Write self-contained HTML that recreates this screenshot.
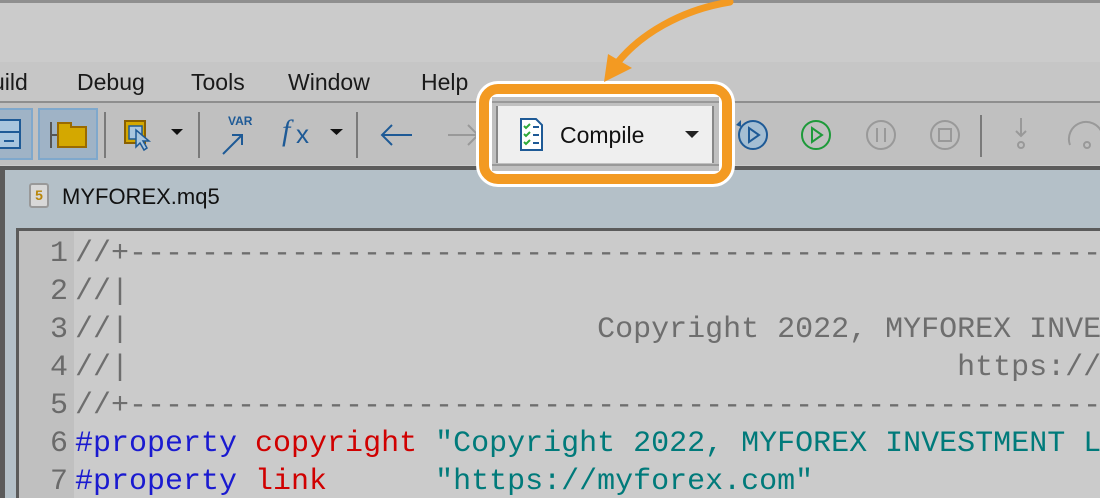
<!DOCTYPE html>
<html><head><meta charset="utf-8"><style>
*{margin:0;padding:0;box-sizing:border-box}
html,body{width:1100px;height:498px;overflow:hidden}
body{background:#cbcbcb;position:relative;font-family:"Liberation Sans",sans-serif}
.abs{position:absolute}
.menu{font-size:23px;color:#1a1a1a;top:69px}
.code{position:absolute;left:56px;top:4px;font-family:"Liberation Mono",monospace;font-size:30px;line-height:38px;white-space:pre;color:#6e6e6e}
.num{position:absolute;left:-1px;top:4px;width:50px;text-align:right;font-family:"Liberation Mono",monospace;font-size:30px;line-height:38px;color:#6a6a6a}
.sep{position:absolute;top:112px;width:2px;height:46px;background:#7a7a7a}
</style></head><body>
<div class="abs" style="left:0;top:0;width:1100px;height:3px;background:#8f8f8f"></div>
<div class="abs" style="left:0;top:62px;width:1100px;height:40px;background:#c6c6c6"></div>
<div class="abs menu" style="left:-8px">uild</div>
<div class="abs menu" style="left:77px">Debug</div>
<div class="abs menu" style="left:191px">Tools</div>
<div class="abs menu" style="left:288px">Window</div>
<div class="abs menu" style="left:421px">Help</div>
<div class="abs" style="left:0;top:101px;width:1100px;height:2px;background:#8e8e8e"></div>
<div class="abs" style="left:0;top:103px;width:1100px;height:62px;background:#c0c0c0"></div>
<div class="abs" style="left:0;top:108px;width:33px;height:52px;background:#9fb3c6;border:2px solid #7fa8cc;border-left:none"></div>
<svg class="abs" style="left:0;top:118px" width="24" height="34"><rect x="-6" y="2" width="26" height="28" fill="#a9c6de" stroke="#1e5a96" stroke-width="2"/><line x1="0" y1="14" x2="20" y2="14" stroke="#1e5a96" stroke-width="2"/><line x1="4" y1="23" x2="14" y2="23" stroke="#1e5a96" stroke-width="2"/></svg>
<div class="abs" style="left:38px;top:108px;width:60px;height:52px;background:#9fb3c6;border:2px solid #7fa8cc"></div>
<svg class="abs" style="left:48px;top:120px" width="45" height="30"><line x1="3" y1="2" x2="3" y2="28" stroke="#555" stroke-width="2"/><line x1="3" y1="15" x2="10" y2="15" stroke="#555" stroke-width="2"/><path d="M10 3h13v4h15v20H10z" fill="#d4a800" stroke="#9a6a00" stroke-width="2"/></svg>
<div class="sep" style="left:104px"></div>
<svg class="abs" style="left:122px;top:116px" width="70" height="42"><rect x="3" y="5" width="20" height="22" fill="#d4a800" stroke="#8a6000" stroke-width="2"/><rect x="7" y="10" width="13" height="13" fill="#a9c6de" stroke="#1e5a96" stroke-width="1.5"/><path d="M14 14 l0 17 4-4 4 7 3-2 -4-7 6 0z" fill="#a9c6de" stroke="#1e5a96" stroke-width="1.5"/><path d="M49 13h12l-6 6z" fill="#111"/></svg>
<div class="sep" style="left:198px"></div>
<div class="abs" style="left:228px;top:114px;font:bold 12px 'Liberation Sans';color:#1e5a96">VAR</div>
<svg class="abs" style="left:220px;top:128px" width="30" height="30"><path d="M3 26 L22 7 M12 7 H22 V17" fill="none" stroke="#1e5a96" stroke-width="2"/></svg>
<div class="abs" style="left:282px;top:114px;font:italic 30px 'Liberation Serif';color:#1e5a96">f</div>
<div class="abs" style="left:296px;top:119px;font:26px 'Liberation Sans';color:#1e5a96">x</div>
<svg class="abs" style="left:330px;top:128px" width="14" height="10"><path d="M0 1h13l-6.5 6z" fill="#111"/></svg>
<div class="sep" style="left:356px"></div>
<svg class="abs" style="left:380px;top:122px" width="40" height="26"><path d="M2 13h30 M12 3 2 13l10 10" fill="none" stroke="#1e5a96" stroke-width="2"/></svg>
<svg class="abs" style="left:446px;top:122px" width="40" height="26"><path d="M2 13h30 M22 3l10 10-10 10" fill="none" stroke="#999" stroke-width="2"/></svg>
<svg class="abs" style="left:733px;top:115px" width="367" height="44">
<circle cx="20" cy="20" r="14" fill="#a4bed3" stroke="#1e5a96" stroke-width="2"/><path d="M3 10 l5 -5 0 7z" fill="#1e5a96"/><path d="M16 13v14l10-7z" fill="none" stroke="#1e5a96" stroke-width="2"/>
<circle cx="83" cy="20" r="14" fill="none" stroke="#1e9a3a" stroke-width="2"/><path d="M79 13v14l10-7z" fill="none" stroke="#1e9a3a" stroke-width="2"/>
<circle cx="148" cy="20" r="14" fill="none" stroke="#999" stroke-width="2"/><path d="M144 13v14M152 13v14" stroke="#999" stroke-width="2"/>
<circle cx="212" cy="20" r="14" fill="none" stroke="#999" stroke-width="2"/><rect x="206" y="14" width="12" height="12" fill="none" stroke="#999" stroke-width="2"/>
<rect x="247" y="-4" width="2" height="46" fill="#7a7a7a"/>
<path d="M288 3v18M283 16l5 5 5-5" fill="none" stroke="#999" stroke-width="2"/><circle cx="288" cy="30" r="3" fill="none" stroke="#999" stroke-width="2"/>
<path d="M337 30a16 16 0 0 1 32 -12" fill="none" stroke="#999" stroke-width="2"/><circle cx="354" cy="30" r="3" fill="none" stroke="#999" stroke-width="2"/>
</svg>
<div class="abs" style="left:0;top:166px;width:1100px;height:332px;background:#5b5b5b"></div>
<div class="abs" style="left:5px;top:170px;width:1095px;height:328px;background:#b4c0c8"></div>
<div class="abs" style="left:29px;top:183px;width:20px;height:25px;background:#d8d8d8;border:2px solid #999;border-radius:3px;font:bold 14px 'Liberation Sans';color:#b8860b;text-align:center;line-height:21px">5</div>
<div class="abs" style="left:62px;top:184px;font-size:22px;color:#111">MYFOREX.mq5</div>
<div class="abs" style="left:16px;top:228px;width:1084px;height:270px;background:#5b5b5b"></div>
<div class="abs" style="left:19px;top:231px;width:1081px;height:267px;background:#cbcbcb;overflow:hidden">
<div class="abs" style="left:0;top:0;width:55px;height:267px;background:#c0c0c0"></div>
<div class="num">1<br>2<br>3<br>4<br>5<br>6<br>7</div>
<div class="code">//+--------------------------------------------------------------
//|
//|                          Copyright 2022, MYFOREX INVESTMENT
//|                                              https://myforex.com
//+--------------------------------------------------------------
<span style="color:#1a1ad0">#property</span> <span style="color:#d00000">copyright</span> <span style="color:#007a7a">"Copyright 2022, MYFOREX INVESTMENT L</span>
<span style="color:#1a1ad0">#property</span> <span style="color:#d00000">link</span>      <span style="color:#007a7a">"https://myforex.com"</span></div>
</div>
<div class="abs" style="left:476px;top:81px;width:259px;height:106px;background:#fff;border-radius:22px"></div>
<div class="abs" style="left:479px;top:84px;width:253px;height:100px;border:10px solid #f39a22;border-radius:19px;background:#fff"></div>
<div class="abs" style="left:492px;top:97px;width:227px;height:74px;background:#c0c0c0"></div>
<div class="abs" style="left:492px;top:101px;width:227px;height:2px;background:#999"></div>
<div class="abs" style="left:492px;top:164px;width:227px;height:2px;background:#999"></div>
<div class="abs" style="left:496px;top:106px;width:218px;height:57px;background:#efefef;border-left:2px solid #888;border-right:2px solid #888"></div>
<svg class="abs" style="left:519px;top:117px" width="26" height="36"><path d="M2 2h15l6 6v25H2z" fill="#fff" stroke="#1e5a96" stroke-width="2"/><path d="M5 9l2 2 4-4M5 17l2 2 4-4M5 25l2 2 4-4" fill="none" stroke="#2eaa3a" stroke-width="2"/><path d="M14 10h6M14 18h6M14 26h6" stroke="#1e5a96" stroke-width="2"/></svg>
<div class="abs" style="left:560px;top:122px;font-size:23px;color:#111">Compile</div>
<svg class="abs" style="left:685px;top:130px" width="16" height="10"><path d="M0 1h14l-7 7z" fill="#222"/></svg>
<svg class="abs" style="left:580px;top:0" width="160" height="90"><path d="M150 2 C100 10 60 35 38 62" fill="none" stroke="#f39a22" stroke-width="7" stroke-linecap="round"/><path d="M24 82 L28 54 L52 68z" fill="#f39a22"/></svg>
</body></html>
